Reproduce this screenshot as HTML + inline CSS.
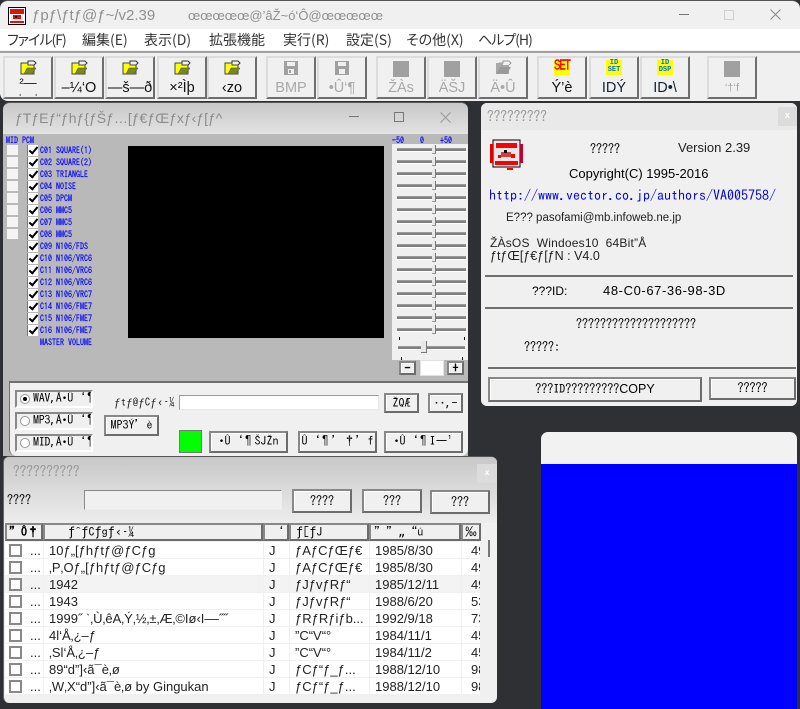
<!DOCTYPE html>
<html><head><meta charset="utf-8"><style>
html,body{margin:0;padding:0}
body{width:800px;height:709px;position:relative;overflow:hidden;background:#2f3034;font-family:"Liberation Sans","IPAGothic",sans-serif;font-size:12px;color:#000}
div,span{position:absolute;white-space:nowrap;box-sizing:border-box}
svg{position:absolute}
.tb{width:50px;height:43px;top:56px;background:#f0f0f0;border:2px solid;border-color:#dcdcdc #6e6e6e #6e6e6e #dcdcdc;text-align:center;font-size:14.5px;line-height:16px;padding-top:22px;color:#111;overflow:hidden}
.dis{color:#a8a8a8}
.sq{width:16px;height:16px;top:3px;left:15px;background:#a0a0a0}
.fl{left:15px;top:2px}
.m{top:31px;font:14px "Noto Sans CJK JP","Liberation Sans",sans-serif;font-feature-settings:"palt";color:#333;line-height:18px}
.g{font-family:"IPAGothic","Liberation Mono",monospace}
.q{font-family:"IPAGothic","Liberation Mono",monospace}
.c{left:27px;width:11px;height:11px;background:#fff;border-left:1px solid #777}
.c::after{content:"";position:absolute;box-sizing:border-box;left:3px;top:0;width:5px;height:9px;border:solid #000;border-width:0 2px 2px 0;transform:rotate(40deg)}
.w{left:7px;width:11px;height:10px;background:#f4f4f4}
.l{left:40px;font:8px/10px "IPAGothic","Liberation Mono",monospace;color:#0000ff;-webkit-text-stroke:.15px #0000ff;transform:scaleY(1.15)}
.s{left:397px;width:69px;height:4px;background:#7f7f7f;border-bottom:1px solid #fff;border-top:1px solid #9a9a9a}
.s::after{content:"";position:absolute;box-sizing:border-box;left:35px;top:-4px;width:4px;height:9px;background:#e8e8e8;border-right:1px solid #777;border-bottom:1px solid #999}
.s.n::after{display:none}
.b{background:#f0f0f0;border:2px solid #888;border-right-color:#6c6c6c;border-bottom-color:#6c6c6c;box-shadow:inset 1px 1px 0 #fff;text-align:center;font:12px/17px "IPAGothic","Liberation Mono",monospace;overflow:hidden}
.r{left:15px;width:78px;height:18px;background:#f0f0f0;border:2px solid #888;border-right-color:#fff;border-bottom-color:#fff;font:12px/13px "IPAGothic",monospace;padding-left:16px;letter-spacing:-.3px;overflow:hidden}
.r i{position:absolute;left:3px;top:2px;width:10px;height:10px;border-radius:50%;background:#fff;border:1px solid #999;box-sizing:border-box}
.h{top:523px;height:18px;background:#f0f0f0;border:2px solid #888;border-right-color:#6c6c6c;border-bottom-color:#6c6c6c;font:12px/15px "IPAGothic",monospace;overflow:hidden;padding-left:2px}
.row{left:5px;width:475px;height:17px;background:#fff;border-bottom:1px solid #f0f0f0;font-size:13px;line-height:17px;color:#222;overflow:hidden}
.row span{top:0}
.row b{position:absolute;left:4px;top:2px;width:13px;height:13px;border:2px solid #888;background:#fff;box-sizing:border-box}
.row u{position:absolute;top:0;width:1px;height:17px;background:#f0f0f0}
</style></head><body>

<!-- main window -->
<div style="left:0;top:0;width:800px;height:101px;background:#f0f0f0;border-radius:8px 8px 0 8px;border-top:1px solid #555"></div>
<svg style="left:8px;top:7px" width="18" height="18" viewBox="0 0 18 18"><rect x=".5" y=".5" width="17" height="17" fill="#fff" stroke="#000"/><rect x="2" y="2" width="14" height="5" fill="#e01010"/><rect x="3" y="8" width="12" height="5" fill="#e8e8e8"/><rect x="5" y="8" width="8" height="4" fill="#e01010"/><rect x="7" y="9" width="2" height="2" fill="#000"/><rect x="2" y="14" width="14" height="2" fill="#e01010"/></svg>
<div style="left:32px;top:6px;font:15px/20px 'Liberation Sans',sans-serif;color:#8f8f8f">ƒpƒ\ƒtƒ@ƒ~/v2.39</div>
<div style="left:188px;top:6px;font:13px/20px 'Liberation Sans',sans-serif;color:#8f8f8f">œœœœœ@’âŽ~ó‘Ô@œœœœœ</div>
<div style="left:679px;top:14px;width:10px;height:1px;background:#777"></div>
<div style="left:724px;top:10px;width:10px;height:10px;border:1px solid #d0d0d0"></div>
<svg style="left:770px;top:9px" width="11" height="11"><path d="M.5.5l10 10M10.5.5l-10 10" stroke="#888" fill="none"/></svg>
<div style="left:0;top:29px;width:800px;height:21px;background:#fff"></div>
<div style="left:0;top:51px;width:800px;height:2px;background:#a0a0a0"></div>
<div class="m" style="left:7px;letter-spacing:-1px">ファイル(F)</div>
<div class="m" style="left:82px">編集(E)</div>
<div class="m" style="left:144px">表示(D)</div>
<div class="m" style="left:209px">拡張機能</div>
<div class="m" style="left:283px">実行(R)</div>
<div class="m" style="left:346px">設定(S)</div>
<div class="m" style="left:406px">その他(X)</div>
<div class="m" style="left:478px;letter-spacing:-1px">ヘルプ(H)</div>

<svg width="0" height="0" style="left:0;top:0"><defs><g id="fo"><path d="M4 3h4V1h6l2 2-2 2" fill="none" stroke="#333"/><path d="M1 3h7v2h6v9H1z" fill="#ffff00" stroke="#444"/><path d="M7 8h9l-4 6H4z" fill="#7a8a18" stroke="#444" stroke-width=".5"/></g></defs></svg>

<div class="tb" style="left:3px;padding-top:19px;font-size:13px;line-height:11px"><svg class="fl" width="17" height="15"><use href="#fo"/></svg>²—<span style="left:14px;top:30px;font-size:8px;line-height:8px">¸</span><span style="left:30px;top:30px;font-size:8px;line-height:8px">¸</span></div>
<div class="tb" style="left:54px"><svg class="fl" width="17" height="15"><use href="#fo"/></svg>–¼‘O</div>
<div class="tb" style="left:105px"><svg class="fl" width="17" height="15"><use href="#fo"/></svg>—š—ð</div>
<div class="tb" style="left:157px"><svg class="fl" width="17" height="15"><use href="#fo"/></svg>×²Ìþ</div>
<div class="tb" style="left:207px"><svg class="fl" width="17" height="15"><use href="#fo"/></svg>‹zo</div>
<div class="tb dis" style="left:266px"><svg class="fl" width="16" height="16"><path d="M1 1h14v14H1z" fill="#a0a0a0"/><path d="M4 2h8v4H4z" fill="#f0f0f0"/><path d="M5 9h6v5H5z" fill="#f0f0f0"/><path d="M6 10h2v3H6z" fill="#a0a0a0"/></svg>BMP</div>
<div class="tb dis" style="left:317px"><svg class="fl" width="16" height="16"><path d="M1 1h14v14H1z" fill="#a0a0a0"/><path d="M4 2h8v4H4z" fill="#f0f0f0"/><path d="M5 9h6v5H5z" fill="#f0f0f0"/></svg>•Û‘¶</div>
<div class="tb dis" style="left:376px"><span class="sq"></span>ŽÀs</div>
<div class="tb dis" style="left:427px"><span class="sq"></span>ÄŠJ</div>
<div class="tb dis" style="left:478px"><svg class="fl" width="17" height="15"><path d="M4 3h4V1h6l2 2-2 2" fill="none" stroke="#999"/><path d="M1 3h7v2h6v9H1z" fill="#a8a8a8"/><path d="M5 7h11l-4 7H1z" fill="#999"/></svg>Ä•Û</div>
<div class="tb" style="left:537px"><span style="left:15px;top:2px;width:16px;height:15px;background:#ffff00"></span><span style="left:15px;top:2px;width:16px;height:15px;color:#f00;font:11px/15px 'Liberation Mono',monospace;-webkit-text-stroke:.3px #f00;letter-spacing:-1.4px;text-align:left;transform:scaleY(1.3)">SET</span>Ý’è</div>
<div class="tb" style="left:589px;color:#123"><span style="left:15px;top:2px;width:16px;height:15px;background:#ffff00;color:#0070e0;font:bold 7px/7px 'Liberation Mono',monospace;text-align:center">ID<br>SET</span>IDÝ</div>
<div class="tb" style="left:640px;color:#123"><span style="left:15px;top:2px;width:16px;height:15px;background:#ffff00;color:#0070e0;font:bold 7px/7px 'Liberation Mono',monospace;text-align:center">ID<br>DSP</span>ID•\</div>
<div class="tb dis" style="left:707px;font-size:11px"><span class="sq"></span>‘†‘f</div>

<!-- synth window -->
<div style="left:3px;top:102px;width:465px;height:354px;background:#b9b9b9;border-radius:7px 7px 0 0;border-top:1px solid #555"></div>
<div style="left:3px;top:103px;width:465px;height:31px;background:linear-gradient(#c8c8c8,#e2e2e2);border-radius:7px 7px 0 0"></div>
<div style="left:15px;top:107px;font:14px/22px 'Liberation Sans',sans-serif;color:#8c8c8c">ƒTƒEƒ“ƒhƒ{ƒŠƒ…[ƒ€ƒŒƒxƒ‹ƒ[ƒ^</div>
<div style="left:349px;top:116px;width:10px;height:1px;background:#777"></div>
<div style="left:394px;top:112px;width:10px;height:10px;border:1px solid #777"></div>
<svg style="left:440px;top:112px" width="11" height="11"><path d="M.5.5l10 10M10.5.5l-10 10" stroke="#999" fill="none"/></svg>
<div class="l" style="left:6px;top:135px">MID PCM</div>
<div class="w" style="top:145px"></div><div class="w" style="top:157px"></div><div class="w" style="top:169px"></div><div class="w" style="top:181px"></div><div class="w" style="top:193px"></div><div class="w" style="top:205px"></div><div class="w" style="top:217px"></div><div class="w" style="top:229px"></div>
<div class="c" style="top:145px"></div><div class="c" style="top:157px"></div><div class="c" style="top:169px"></div><div class="c" style="top:181px"></div><div class="c" style="top:193px"></div><div class="c" style="top:205px"></div><div class="c" style="top:217px"></div><div class="c" style="top:229px"></div><div class="c" style="top:241px"></div><div class="c" style="top:253px"></div><div class="c" style="top:265px"></div><div class="c" style="top:277px"></div><div class="c" style="top:289px"></div><div class="c" style="top:301px"></div><div class="c" style="top:313px"></div><div class="c" style="top:325px"></div>
<div class="l" style="top:145px">C01 SQUARE(1)</div>
<div class="l" style="top:157px">C02 SQUARE(2)</div>
<div class="l" style="top:169px">C03 TRIANGLE</div>
<div class="l" style="top:181px">C04 NOISE</div>
<div class="l" style="top:193px">C05 DPCM</div>
<div class="l" style="top:205px">C06 MMC5</div>
<div class="l" style="top:217px">C07 MMC5</div>
<div class="l" style="top:229px">C08 MMC5</div>
<div class="l" style="top:241px">C09 N106/FDS</div>
<div class="l" style="top:253px">C10 N106/VRC6</div>
<div class="l" style="top:265px">C11 N106/VRC6</div>
<div class="l" style="top:277px">C12 N106/VRC6</div>
<div class="l" style="top:289px">C13 N106/VRC7</div>
<div class="l" style="top:301px">C14 N106/FME7</div>
<div class="l" style="top:313px">C15 N106/FME7</div>
<div class="l" style="top:325px">C16 N106/FME7</div>
<div class="l" style="top:337px">MASTER VOLUME</div>
<div style="left:128px;top:146px;width:256px;height:192px;background:#000"></div>
<div style="left:392px;top:144px;width:76px;height:216px;background:#f0f0f0"></div>
<div class="l" style="left:392px;top:135px">-50</div><div class="l" style="left:420px;top:135px">0</div><div class="l" style="left:440px;top:135px">+50</div>
<div class="s" style="top:148px"></div><div class="s" style="top:160px"></div><div class="s" style="top:172px"></div><div class="s" style="top:184px"></div><div class="s" style="top:196px"></div><div class="s" style="top:208px"></div><div class="s" style="top:220px"></div><div class="s" style="top:232px"></div><div class="s" style="top:244px"></div><div class="s" style="top:256px"></div><div class="s" style="top:268px"></div><div class="s" style="top:280px"></div><div class="s" style="top:292px"></div><div class="s" style="top:304px"></div><div class="s" style="top:316px"></div><div class="s" style="top:328px"></div>
<div style="left:399px;top:337px;width:1px;height:3px;background:#000"></div><div style="left:464px;top:337px;width:1px;height:3px;background:#000"></div>
<div class="s n" style="left:398px;top:346px;width:67px"></div>
<div style="left:421px;top:341px;width:6px;height:12px;background:#e8e8e8;border-right:1px solid #777;border-bottom:1px solid #777"></div>
<div style="left:401px;top:357px;width:1px;height:3px;background:#000"></div><div style="left:462px;top:357px;width:1px;height:3px;background:#000"></div>
<div class="b" style="left:399px;top:361px;width:17px;height:14px;line-height:10px;font-weight:bold">-</div>
<div style="left:420px;top:360px;width:24px;height:16px;background:#fff;border:1px solid #e0e0e0"></div>
<div class="b" style="left:447px;top:361px;width:17px;height:14px;line-height:10px;font-weight:bold">+</div>

<div style="left:9px;top:381px;width:459px;height:75px;background:#f0f0f0;border-top:2px solid #707070;border-left:1px solid #707070;border-radius:0 0 7px 7px"></div>
<div class="r" style="top:390px"><i><i style="left:2px;top:2px;width:4px;height:4px;background:#000;border:0"></i></i>WAV,Å•Û‘¶</div>
<div class="r" style="top:412px"><i></i>MP3,Å•Û‘¶</div>
<div class="r" style="top:434px"><i></i>MID,Å•Û‘¶</div>
<div class="g" style="left:114px;top:396px;font-size:11px;line-height:14px;color:#222">ƒtƒ@ƒCƒ‹–¼</div>
<div style="left:179px;top:395px;width:200px;height:15px;background:#fff;border:1px solid #999;border-right-color:#e8e8e8;border-bottom-color:#e8e8e8"></div>
<div class="b" style="left:384px;top:393px;width:35px;height:20px">ŽQÆ</div>
<div class="b" style="left:428px;top:393px;width:35px;height:20px">··,-</div>
<div class="b" style="left:104px;top:415px;width:55px;height:21px">MP3Ý’è</div>
<div style="left:179px;top:430px;width:23px;height:23px;background:#00ff00;border:1px solid #777"></div>
<div class="b" style="left:209px;top:431px;width:79px;height:22px">•Û‘¶ŠJŽn</div>
<div class="b" style="left:298px;top:431px;width:79px;height:22px">Û‘¶’†’f</div>
<div class="b" style="left:384px;top:431px;width:79px;height:22px">•Û‘¶I—¹</div>

<!-- about window -->
<div style="left:481px;top:103px;width:316px;height:303px;background:#f0f0f0;border-radius:6px"></div>
<div style="left:481px;top:103px;width:316px;height:27px;background:#e9e9e9;border-radius:6px 6px 0 0"></div>
<div class="q" style="left:487px;top:106px;font-size:13.3px;line-height:20px;color:#999">?????????</div>
<div style="left:778px;top:107px;width:19px;height:19px;background:#dcdcdc;color:#fff;font:bold 9px/19px 'Liberation Mono',monospace;text-align:center">x</div>
<svg style="left:490px;top:138px" width="33" height="33" viewBox="0 0 33 33"><rect x="3" y="2" width="27" height="27" fill="#e8e8e8" stroke="#000"/><rect x="0" y="6" width="3" height="19" fill="#e00000"/><rect x="30" y="6" width="3" height="19" fill="#c00030"/><rect x="6" y="5" width="21" height="5" fill="#f00"/><rect x="11" y="14" width="10" height="5" fill="#d04040"/><rect x="14" y="12" width="3" height="3" fill="#000"/><rect x="8" y="17" width="3" height="3" fill="#f00"/><rect x="21" y="16" width="4" height="4" fill="#f00"/><rect x="5" y="23" width="23" height="4" fill="#f00"/><rect x="17" y="30" width="6" height="2" fill="#f00"/></svg>
<div class="q" style="left:590px;top:141px;font-size:12px;line-height:16px">?????</div>
<div style="left:678px;top:140px;font-size:13px;line-height:16px;color:#222">Version 2.39</div>
<div style="left:569px;top:166px;font-size:13px;line-height:16px">Copyright(C) 1995-2016</div>
<div style="left:489px;top:186px;font:14px/18px 'IPAGothic','Liberation Mono',monospace;color:#0000e0">http://www.vector.co.jp/authors/VA005758/</div>
<div style="left:506px;top:210px;font-size:11.5px;line-height:16px;color:#222">E??? pasofami@mb.infoweb.ne.jp</div>
<div style="left:490px;top:235px;font-size:12px;line-height:16px;color:#222;letter-spacing:.2px">ŽÀsOS&nbsp; Windoes10&nbsp; 64Bit”Å</div>
<div style="left:490px;top:248px;font-size:12.5px;line-height:16px;color:#222">ƒtƒŒ[ƒ€ƒ[ƒN : V4.0</div>
<div style="left:485px;top:275px;width:308px;height:2px;background:#707070"></div>
<div style="left:532px;top:283px;font-size:12px;line-height:16px">???ID:</div>
<div style="left:603px;top:283px;font-size:13px;line-height:16px;letter-spacing:.6px">48-C0-67-36-98-3D</div>
<div style="left:485px;top:307px;width:308px;height:2px;background:#707070"></div>
<div class="q" style="left:576px;top:316px;font-size:12px;line-height:16px">????????????????????</div>
<div class="q" style="left:524px;top:339px;font-size:12px;line-height:16px">?????:</div>
<div style="left:488px;top:367px;width:308px;height:2px;background:#707070"></div>
<div class="b" style="left:488px;top:377px;width:214px;height:25px;font:12px/20px 'IPAGothic',sans-serif">???ID?????????<span style="position:static;font:12.5px 'Liberation Sans',sans-serif">COPY</span></div>
<div class="b" style="left:709px;top:377px;width:87px;height:23px;font:12px/18px 'IPAGothic',sans-serif">?????</div>

<!-- blue window -->
<div style="left:541px;top:432px;width:256px;height:277px;background:#f2f2f2;border-radius:7px 7px 0 0;overflow:hidden"><div style="left:0;top:32px;width:256px;height:245px;background:#0000ff"></div></div>

<!-- list window -->
<div style="left:3px;top:456px;width:494px;height:247px;background:#f0f0f0;border-radius:6px;border-top:1px solid #555;border-left:1px solid #666"></div>
<div style="left:4px;top:457px;width:493px;height:66px;background:linear-gradient(#c8c8c8,#ededed);border-radius:6px 6px 0 0"></div>
<div class="q" style="left:13px;top:462px;font-size:13.3px;line-height:18px;color:#999">??????????</div>
<div style="left:477px;top:464px;width:20px;height:19px;background:#dcdcdc;color:#fff;font:bold 8px/19px 'Liberation Mono',monospace;text-align:center">x</div>
<div class="q" style="left:7px;top:493px;font-size:12px;line-height:15px">????</div>
<div style="left:84px;top:490px;width:198px;height:20px;background:#f0f0f0;border:1px solid #888;border-right-color:#eee;border-bottom-color:#eee"></div>
<div class="b" style="left:292px;top:489px;width:60px;height:24px;font:12px/20px 'IPAGothic',sans-serif">????</div>
<div class="b" style="left:362px;top:489px;width:60px;height:24px;font:12px/20px 'IPAGothic',sans-serif">???</div>
<div class="b" style="left:430px;top:490px;width:60px;height:24px;font:12px/20px 'IPAGothic',sans-serif">???</div>

<div class="h" style="left:5px;width:38px;font-weight:bold">”Ô†</div>
<div class="h" style="left:43px;width:220px;padding-left:23px">ƒ^ƒCƒgƒ‹–¼</div>
<div class="h" style="left:263px;width:26px;padding-left:6px">‘</div>
<div class="h" style="left:289px;width:80px;padding-left:5px">ƒ[ƒJ</div>
<div class="h" style="left:369px;width:92px;padding-left:3px">”­”„“ú</div>
<div class="h" style="left:461px;width:20px">‰</div>
<div style="left:488px;top:540px;width:2px;height:17px;background:#777"></div>

<div class="row" style="top:542px"><b></b><span style="left:25px">...</span><u style="left:38px"></u><span style="left:44px">10ƒ„[ƒhƒtƒ@ƒCƒg</span><u style="left:258px"></u><span style="left:264px">J</span><u style="left:284px"></u><span style="left:290px">ƒAƒCƒŒƒ€</span><u style="left:364px"></u><span style="left:370px">1985/8/30</span><u style="left:456px"></u><span style="left:466px">49</span></div>
<div class="row" style="top:559px"><b></b><span style="left:25px">...</span><u style="left:38px"></u><span style="left:44px">‚P‚Oƒ„[ƒhƒtƒ@ƒCƒg</span><u style="left:258px"></u><span style="left:264px">J</span><u style="left:284px"></u><span style="left:290px">ƒAƒCƒŒƒ€</span><u style="left:364px"></u><span style="left:370px">1985/8/30</span><u style="left:456px"></u><span style="left:466px">49</span></div>
<div class="row" style="top:576px;background:#f3f3f3"><b></b><span style="left:25px">...</span><u style="left:38px"></u><span style="left:44px">1942</span><u style="left:258px"></u><span style="left:264px">J</span><u style="left:284px"></u><span style="left:290px">ƒJƒvƒRƒ“</span><u style="left:364px"></u><span style="left:370px">1985/12/11</span><u style="left:456px"></u><span style="left:466px">49</span></div>
<div class="row" style="top:593px"><b></b><span style="left:25px">...</span><u style="left:38px"></u><span style="left:44px">1943</span><u style="left:258px"></u><span style="left:264px">J</span><u style="left:284px"></u><span style="left:290px">ƒJƒvƒRƒ“</span><u style="left:364px"></u><span style="left:370px">1988/6/20</span><u style="left:456px"></u><span style="left:466px">53</span></div>
<div class="row" style="top:610px"><b></b><span style="left:25px">...</span><u style="left:38px"></u><span style="left:44px">1999˝ ˋ‚Ù‚êA‚Ý‚½‚±‚Æ‚©Iø‹I––˝˝</span><u style="left:258px"></u><span style="left:264px">J</span><u style="left:284px"></u><span style="left:290px">ƒRƒRƒiƒb...</span><u style="left:364px"></u><span style="left:370px">1992/9/18</span><u style="left:456px"></u><span style="left:466px">73</span></div>
<div class="row" style="top:627px"><b></b><span style="left:25px">...</span><u style="left:38px"></u><span style="left:44px">4l‘Å‚¿–ƒ</span><u style="left:258px"></u><span style="left:264px">J</span><u style="left:284px"></u><span style="left:290px">”C“V“°</span><u style="left:364px"></u><span style="left:370px">1984/11/1</span><u style="left:456px"></u><span style="left:466px">45</span></div>
<div class="row" style="top:644px"><b></b><span style="left:25px">...</span><u style="left:38px"></u><span style="left:44px">‚Sl‘Å‚¿–ƒ</span><u style="left:258px"></u><span style="left:264px">J</span><u style="left:284px"></u><span style="left:290px">”C“V“°</span><u style="left:364px"></u><span style="left:370px">1984/11/2</span><u style="left:456px"></u><span style="left:466px">45</span></div>
<div class="row" style="top:661px"><b></b><span style="left:25px">...</span><u style="left:38px"></u><span style="left:44px">89“d”]‹ã¯è‚ø</span><u style="left:258px"></u><span style="left:264px">J</span><u style="left:284px"></u><span style="left:290px">ƒCƒ“ƒ_ƒ...</span><u style="left:364px"></u><span style="left:370px">1988/12/10</span><u style="left:456px"></u><span style="left:466px">98</span></div>
<div class="row" style="top:678px"><b></b><span style="left:25px">...</span><u style="left:38px"></u><span style="left:44px">‚W‚X“d”]‹ã¯è‚ø by Gingukan</span><u style="left:258px"></u><span style="left:264px">J</span><u style="left:284px"></u><span style="left:290px">ƒCƒ“ƒ_ƒ...</span><u style="left:364px"></u><span style="left:370px">1988/12/10</span><u style="left:456px"></u><span style="left:466px">98</span></div>

</body></html>
